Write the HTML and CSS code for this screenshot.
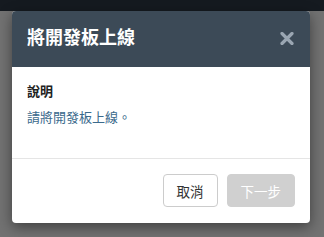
FILE: index.html
```html
<!DOCTYPE html>
<html lang="zh-Hant">
<head>
  <meta charset="UTF-8">
  <meta name="viewport" content="width=device-width, initial-scale=1.0">
  <title>將開發板上線</title>
  <link rel="stylesheet" href="styles.css">
</head>
<body>
  <div class="topbar"></div>
  <div class="backdrop">
    <div class="modal">
      <div class="modal-header">
        <h1>將開發板上線</h1>
        <svg class="close" width="14" height="13" viewBox="0 0 14 13">
          <path d="M2 1.5 L12 11.5 M12 1.5 L2 11.5" stroke="#9aa6b2" stroke-width="3.2" stroke-linecap="round"/>
        </svg>
      </div>
      <div class="modal-body">
        <div class="label">說明</div>
        <div class="desc">請將開發板上線。</div>
      </div>
      <div class="modal-footer">
        <button class="btn btn-cancel">取消</button>
        <button class="btn btn-next" disabled>下一步</button>
      </div>
    </div>
  </div>
</body>
</html>
```

FILE: styles.css
```css
* {
  margin: 0;
  padding: 0;
  box-sizing: border-box;
}

body {
  font-family: "Liberation Sans", "Noto Sans CJK TC", sans-serif;
  background: #727272;
  height: 237px;
  overflow: hidden;
  color: #333;
}

.topbar {
  height: 11px;
  background: #151a20;
}

.backdrop {
  padding: 0 14px 0 12px;
}

.modal {
  width: 298px;
  background: white;
  border-radius: 4px;
  overflow: hidden;
  box-shadow: 0 4px 14px rgba(0,0,0,0.45);
}

.modal-header {
  height: 56px;
  background: #3c4a57;
  display: flex;
  align-items: center;
  justify-content: space-between;
  padding: 0 16px 0 15px;
}

.modal-header h1 {
  color: white;
  font-size: 18px;
  font-weight: 700;
  line-height: 20px;
  margin-top: -2px;
}

.close {
  display: block;
  margin-top: -2px;
}

.modal-body {
  padding: 16px 15px 31px;
}

.label {
  font-size: 13px;
  font-weight: 700;
  line-height: 18px;
  color: #222;
  margin-bottom: 8px;
}

.desc {
  font-size: 13px;
  line-height: 18px;
  color: #3b6a8c;
}

.modal-footer {
  border-top: 1px solid #e5e5e5;
  display: flex;
  justify-content: flex-end;
  gap: 9px;
  padding: 15px 15px 16px;
}

.btn {
  font-family: inherit;
  font-size: 13.5px;
  height: 33px;
  padding: 0 13px;
  border-radius: 4px;
}

.btn-cancel {
  background: white;
  border: 1px solid #ccc;
  color: #333;
}

.btn-next {
  background: #d0d0d0;
  border: 1px solid #d0d0d0;
  color: white;
}
```
